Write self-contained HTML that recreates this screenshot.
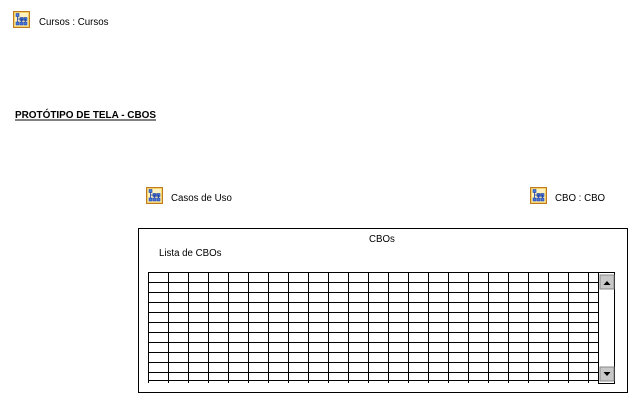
<!DOCTYPE html>
<html><head><meta charset="utf-8"><style>
html,body{margin:0;padding:0;background:#fff;width:640px;height:402px;overflow:hidden}
svg{display:block}
text{font-family:"Liberation Sans",Arial,sans-serif;font-size:9.7px;fill:#000}
</style></head><body>
<svg width="640" height="402" viewBox="0 0 640 402" xmlns="http://www.w3.org/2000/svg">
<defs>
<g id="ic">
<rect x="0.5" y="0.5" width="16" height="16" fill="#f4d26a" stroke="#c07a20"/>
<rect x="2" y="2" width="13" height="13" fill="#fff2c0"/>
<g fill="#4a7ce0" stroke="#1e3f9e" stroke-width="0.6">
<rect x="3" y="2.5" width="3" height="3"/>
<rect x="7" y="6.5" width="3" height="3"/>
<rect x="11" y="6.5" width="3" height="3"/>
<rect x="7" y="11" width="3" height="3"/>
<rect x="11" y="11" width="3" height="3"/>
<rect x="3" y="11" width="3" height="3"/>
</g>
<path d="M4.5 5.5V8H12.5M8.5 8V11M12.5 8V11M4.5 8V11" stroke="#1e3f9e" stroke-width="0.8" fill="none"/>
</g>
</defs>
<use href="#ic" x="13" y="11"/>
<text x="39" y="25">Cursos : Cursos</text>
<text x="15" y="118" font-weight="bold" font-size="10" textLength="141" lengthAdjust="spacingAndGlyphs">PROTÓTIPO DE TELA - CBOS</text>
<line x1="15" y1="120" x2="156" y2="120" stroke="#000" stroke-width="1"/>
<use href="#ic" x="146" y="187"/>
<text x="171" y="201">Casos de Uso</text>
<use href="#ic" x="530" y="187"/>
<text x="555" y="201">CBO : CBO</text>
<rect x="138.5" y="228.5" width="489" height="164" fill="#fff" stroke="#000"/>
<text x="369" y="242">CBOs</text>
<text x="159" y="256">Lista de CBOs</text>
<g stroke="#000" stroke-width="1" shape-rendering="crispEdges">
<path d="M148 272.5H598M148 282.5H598M148 292.5H598M148 302.5H598M148 312.5H598M148 322.5H598M148 332.5H598M148 342.5H598M148 352.5H598M148 362.5H598M148 372.5H598M148 380.5H598"/>
<path d="M148.5 272V383M168.5 272V383M188.5 272V383M208.5 272V383M228.5 272V383M248.5 272V383M268.5 272V383M288.5 272V383M308.5 272V383M328.5 272V383M348.5 272V383M368.5 272V383M388.5 272V383M408.5 272V383M428.5 272V383M448.5 272V383M468.5 272V383M488.5 272V383M508.5 272V383M528.5 272V383M548.5 272V383M568.5 272V383M588.5 272V383"/>
<rect x="598.5" y="272.5" width="16" height="111" fill="#fff"/>
<rect x="600" y="275" width="14" height="14" fill="#c8c8c8" stroke="#888"/>
<rect x="600" y="367" width="14" height="14" fill="#c8c8c8" stroke="#888"/>
</g>
<path d="M603.5 285L607 281L610.5 285Z" fill="#000"/>
<path d="M603.5 372L607 376L610.5 372Z" fill="#000"/>
</svg>
</body></html>
